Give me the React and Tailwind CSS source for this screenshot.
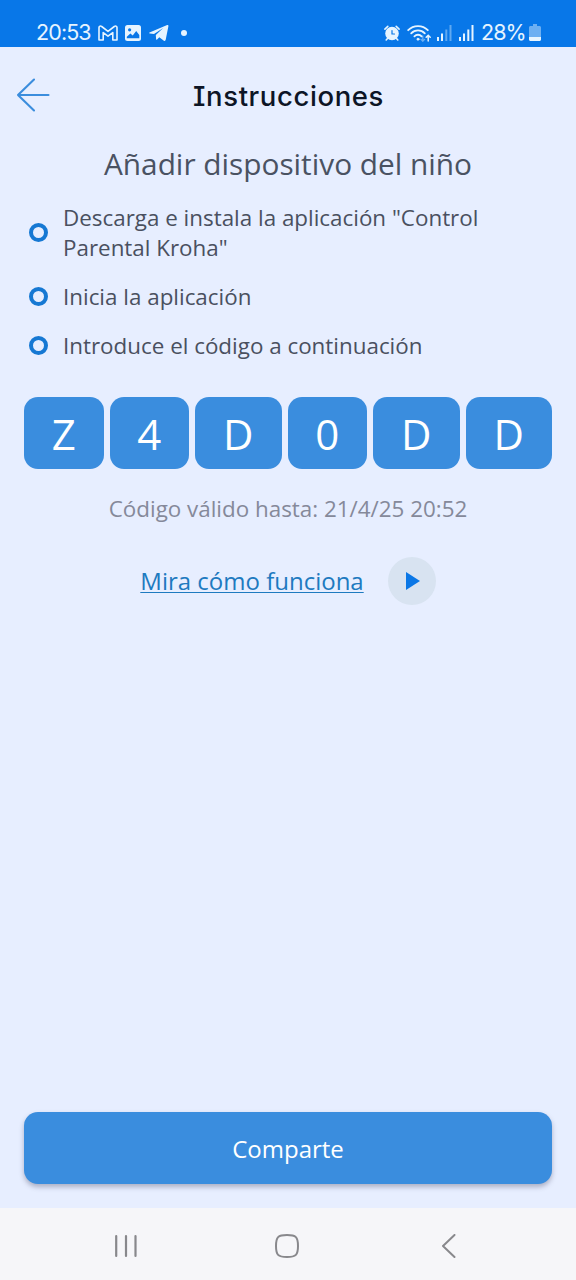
import React from 'react';

const steps = [
  'Descarga e instala la aplicación "Control Parental Kroha"',
  'Inicia la aplicación',
  'Introduce el código a continuación',
];

// wide letters get a slightly bigger box
const code = [
  { char: 'Z', width: 'w-[79.5px]' },
  { char: '4', width: 'w-[79.5px]' },
  { char: 'D', width: 'w-[86.5px]' },
  { char: '0', width: 'w-[79.5px]' },
  { char: 'D', width: 'w-[86.5px]' },
  { char: 'D', width: 'w-[86.5px]' },
];

const StatusBar = () => (
  <div className="flex h-[47px] shrink-0 items-end bg-[#0877e8] pr-[35px] pb-[3px] pl-9 text-[#e6f4ff]">
    <span className="w-[62px] font-['Inter','Roboto',sans-serif] text-[21.5px] leading-6 tracking-[-0.9px]">20:53</span>

    {/* Gmail */}
    <svg className="mb-[3px] h-4 w-5" viewBox="0 0 20 16" fill="none" stroke="currentColor" strokeWidth="1.6" strokeLinejoin="round">
      <path d="M1 2.6C1 1.2 2.6.6 3.7 1.5L10 6.4l6.3-4.9C17.4.6 19 1.2 19 2.6V15h-4.2V7.6L10 11.2 5.2 7.6V15H1V2.6Z" />
    </svg>

    {/* Gallery */}
    <svg className="mb-[3px] ml-[7px] h-4 w-4" viewBox="0 0 16 16">
      <rect width="16" height="16" rx="2.5" fill="currentColor" />
      <circle cx="4.6" cy="4.8" r="1.6" fill="#0877e8" />
      <path d="M1.8 13.2v-1.5l3.6-3.2 2.3 1.9 3.5-4.3 3.1 3.9v3.2Z" fill="#0877e8" />
    </svg>

    {/* Telegram */}
    <svg className="mb-0.5 ml-2 h-[18px] w-5" viewBox="0 0 20 18" fill="currentColor">
      <path d="M.5 8.6 18.2 1c.8-.3 1.4.1 1.2 1.2l-2.7 13.6c-.2 1.1-.9 1.4-1.8.9l-4.6-3.5-2.2 2.3c-.5.5-1 .3-1-.4l-.3-4L14.2 4 5 9.9.8 9.5c-.7-.2-.9-.6-.3-.9Z" />
    </svg>
    <span className="mb-2 ml-[12px] h-1.5 w-1.5 rounded-full bg-current" />

    <div className="flex-1" />

    {/* Alarm */}
    <svg className="mr-[-1px] mb-[3px] h-4 w-4" viewBox="0 0 16 16" fill="none" stroke="currentColor" strokeLinecap="round">
      <circle cx="8" cy="8.5" r="6.8" fill="currentColor" stroke="none" />
      <path d="M.9 4.1 3.8 1.3M15.1 4.1l-2.9-2.8M3.5 13.5 2.2 15M12.5 13.5l1.3 1.5" strokeWidth="1.6" />
      <path d="M8 5.5V9h2.5" stroke="#0877e8" strokeWidth="1.2" />
    </svg>

    {/* Wifi with data arrows */}
    <svg className="mb-0.5 ml-2 h-[18px] w-6" viewBox="0 0 24 18" fill="none" stroke="currentColor" strokeWidth="1.8" strokeLinecap="round">
      <path d="M1.2 6.2c5.2-5.5 14.4-5.5 19.6 0M4.2 9.3c3.6-3.8 10-3.8 13.6 0M7.4 12.3c2-2.1 5.2-2.1 7.2 0" />
      <circle cx="11" cy="15.2" r="1" fill="currentColor" strokeWidth="1" />
      <path d="M15.8 12v5M14 15.4l1.8 1.8 1.8-1.8" strokeWidth="1.3" opacity=".45" />
      <path d="M21.2 17v-5.5M19.2 13.2l2-2 2 2" strokeWidth="1.5" />
    </svg>

    {/* Signal SIM 1 / SIM 2 */}
    <svg className="mb-[3px] ml-[6px] h-4 w-[15px]" viewBox="0 0 15 16" fill="currentColor">
      <rect y="12" width="2" height="4" />
      <rect x="4" y="8.5" width="2" height="7.5" />
      <rect x="8.3" y="4.5" width="2" height="11.5" opacity=".4" />
      <rect x="12.5" width="2" height="16" opacity=".4" />
    </svg>
    <svg className="mb-[3px] ml-[7px] h-4 w-[15px]" viewBox="0 0 15 16" fill="currentColor">
      <rect y="12" width="2" height="4" />
      <rect x="4" y="8.5" width="2" height="7.5" />
      <rect x="8.3" y="4.5" width="2" height="11.5" />
      <rect x="12.5" width="2" height="16" />
    </svg>

    <span className="ml-[7px] w-[48px] font-['Inter','Roboto',sans-serif] text-[21.5px] leading-6 tracking-[-0.9px]">28%</span>

    {/* Battery */}
    <svg className="mb-[3px] h-[17px] w-3" viewBox="0 0 12 17" fill="currentColor">
      <path d="M4 0h4v2h2.5c.8 0 1.5.7 1.5 1.5V13H0V3.5C0 2.7.7 2 1.5 2H4Z" opacity=".45" />
      <path d="M0 13h12v2.5c0 .8-.7 1.5-1.5 1.5h-9C.7 17 0 16.3 0 15.5Z" />
    </svg>
  </div>
);

const NavBar = () => (
  <div className="flex h-[72px] shrink-0 items-center bg-[#f6f6f9] pt-1 pl-[114px] text-[#88888c]">
    <svg className="h-6 w-6" viewBox="0 0 24 24" stroke="currentColor" strokeWidth="2.2" strokeLinecap="round">
      <path d="M2.2 2v20M12 2v20M21.5 2v20" />
    </svg>
    <svg className="ml-[136px] h-[26px] w-[26px]" viewBox="0 0 26 26" fill="none" stroke="currentColor" strokeWidth="2">
      <path d="M13 2C4 2 2 4 2 13s2 11 11 11 11-2 11-11S22 2 13 2Z" />
    </svg>
    <svg className="ml-[141px] h-6 w-4" viewBox="0 0 16 24" fill="none" stroke="currentColor" strokeWidth="2" strokeLinecap="round" strokeLinejoin="round">
      <path d="M13.5 1 2 12l11.5 11" />
    </svg>
  </div>
);

const App = () => {
  return (
    <div className="flex h-[1280px] w-[576px] flex-col overflow-hidden bg-[#e7eeff] font-['Open_Sans','Noto_Sans',sans-serif]">
      <StatusBar />

      <header className="grid h-[96px] shrink-0 grid-cols-[64px_1fr_64px] items-center">
        <button className="pl-4" aria-label="Atrás">
          <svg className="h-9 w-[34px]" viewBox="0 0 34 36" fill="none" stroke="#3b8ddd" strokeWidth="2.1" strokeLinecap="round" strokeLinejoin="round">
            <path d="M18 2.5 2 18l16 15.5M2 18h30.5" />
          </svg>
        </button>
        <h1 className="pt-px pl-px text-center font-['Inter',sans-serif] text-[27.5px] leading-9 font-[450] tracking-[0.6px] whitespace-nowrap text-[#0d1526] [font-feature-settings:'cv08']">
          Instrucciones
        </h1>
      </header>

      <main className="flex flex-1 flex-col px-6">
        <h2 className="text-center text-[29.8px] leading-[42px] whitespace-nowrap text-[#4a5262]">Añadir dispositivo del niño</h2>

        <ul className="mt-4 flex flex-col gap-[17px] pl-[5px]">
          {steps.map((step, index) => (
            <li key={index} className="flex items-center text-[22.4px] leading-[30px] text-[#4a5060]">
              <span className="mr-[15px] h-[19px] w-[19px] shrink-0 rounded-full border-[4px] border-[#1678d3]" />
              <span className="pt-[2px]">{step}</span>
            </li>
          ))}
        </ul>

        {/* Pairing code */}
        <div className="mt-9 flex h-[72px] justify-between">
          {code.map((item, index) => (
            <div
              key={index}
              className={`flex items-center justify-center rounded-[14px] bg-[#3a8dde] pt-px text-[42px] leading-none text-white ${item.width}`}
            >
              {item.char}
            </div>
          ))}
        </div>

        <p className="mt-[25px] text-center text-[22.4px] leading-[30px] whitespace-nowrap text-[#85899a]">
          Código válido hasta: 21/4/25 20:52
        </p>

        <div className="mt-[33px] flex items-center justify-center gap-6">
          <a href="#" className="text-[24px] leading-8 whitespace-nowrap text-[#1e7ac0] underline decoration-1 underline-offset-2">
            Mira cómo funciona
          </a>
          <button className="flex h-12 w-12 items-center justify-center rounded-full bg-[#d8e3f1]" aria-label="Reproducir">
            <svg className="ml-[3px] h-[18px] w-[14px]" viewBox="0 0 14 18" fill="#0b77e6">
              <path d="M0 0v18l14-9Z" />
            </svg>
          </button>
        </div>

        <button className="mt-auto mb-6 h-[72px] w-full rounded-[14px] bg-[#3a8dde] pt-px text-[24px] text-white shadow-[0_3px_5px_rgba(60,60,90,0.35)]">
          Comparte
        </button>
      </main>

      <NavBar />
    </div>
  );
};

export default App;
